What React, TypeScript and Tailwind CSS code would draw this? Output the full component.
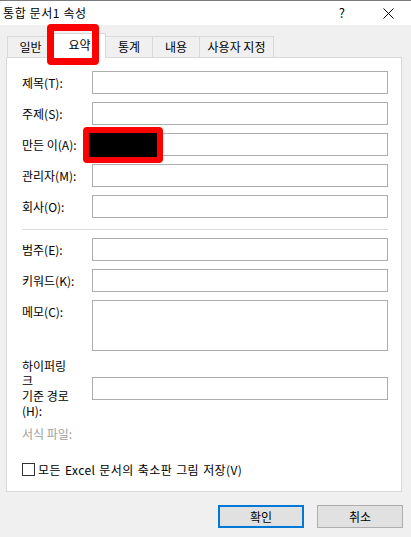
import React from "react";

const Field = ({ label }: { label: string }) => (
  <div className="flex items-center">
    <div className="w-[70px] leading-[16px]">{label}</div>
    <div className="flex-1 h-[23px] border border-[#adadad] bg-white" />
  </div>
);

export default function App() {
  const tabs = [
    { t: "일반", w: 47 },
    { t: "요약", w: 53, active: true },
    { t: "통계", w: 48 },
    { t: "내용", w: 48 },
    { t: "사용자 지정", w: 75 },
  ];
  return (
    <div
      className="relative w-[411px] h-[537px] bg-[#f0f0f0] flex flex-col text-[12px] text-black overflow-hidden"
      style={{ fontFamily: '"Noto Sans CJK KR", "Noto Sans", sans-serif' }}
    >
      {/* title bar */}
      <div className="h-[25px] shrink-0 bg-white border-t border-[#7a7a7a] flex items-center pl-[3px]">
        <span className="leading-[16px] tracking-[0.6px]">통합 문서1 속성</span>
        <span className="ml-auto mr-[38px] text-[13px] leading-[16px]">?</span>
        <svg width="11" height="11" viewBox="0 0 11 11" className="mr-[17px]">
          <path d="M0.5 0.5 L10.5 10.5 M10.5 0.5 L0.5 10.5" stroke="#000" strokeWidth="1" />
        </svg>
      </div>

      {/* tabs */}
      <div className="h-[32px] shrink-0 flex items-end pl-[7px] relative z-10">
        {tabs.map((tab, i) =>
          tab.active ? (
            <div
              key={tab.t}
              className="h-[25px] -mb-px -ml-px bg-white border-l border-t border-r border-[#d9d9d9] flex justify-center pt-[3px] leading-[16px]"
              style={{ width: tab.w }}
            >
              {tab.t}
            </div>
          ) : (
            <div
              key={tab.t}
              className={`h-[21px] border-l border-t border-r border-[#d9d9d9] bg-[#f0f0f0] flex justify-center pt-[2px] leading-[16px] ${i === 0 ? "" : "-ml-px"}`}
              style={{ width: tab.w }}
            >
              {tab.t}
            </div>
          )
        )}
      </div>

      {/* panel */}
      <div className="mx-[6px] w-[396px] h-[435px] shrink-0 border border-[#d9d9d9] bg-white pl-[15px] pr-[13px] pt-[13px] flex flex-col">
        <div className="flex flex-col gap-[8px]">
          <Field label="제목(T):" />
          <Field label="주제(S):" />
          <Field label="만든 이(A):" />
          <Field label="관리자(M):" />
          <Field label="회사(O):" />
        </div>
        <div className="mt-[11px] h-px bg-[#dcdcdc]" />
        <div className="mt-[8px] flex flex-col gap-[8px]">
          <Field label="범주(E):" />
          <Field label="키워드(K):" />
          <div className="flex items-start">
            <div className="w-[70px] leading-[16px] pt-[4px]">메모(C):</div>
            <div className="flex-1 h-[51px] border border-[#adadad] bg-white" />
          </div>
        </div>
        <div className="mt-[7px] flex items-start">
          <div className="w-[70px] leading-[15px]">
            하이퍼링
            <br />크
            <br />기준 경로
            <br />
            (H):
          </div>
          <div className="flex-1 mt-[19px] h-[23px] border border-[#adadad] bg-white" />
        </div>
        <div className="mt-[8px] leading-[15px] text-[#a0a0a0]">서식 파일:</div>
        <div className="mt-[21px] flex items-center h-[15px]">
          <div className="w-[13px] h-[13px] border border-[#333333] bg-white" />
          <span className="ml-[3px] leading-[15px] tracking-[0.4px] [word-spacing:1px]">
            모든 Excel 문서의 축소판 그림 저장(V)
          </span>
        </div>
      </div>

      {/* buttons */}
      <div className="mt-[13px] flex justify-end pr-[8px] gap-[13px]">
        <div className="w-[86px] h-[23px] bg-[#e1e1e1] border-2 border-[#0078d7] flex items-center justify-center leading-[16px]">
          확인
        </div>
        <div className="w-[86px] h-[23px] bg-[#e1e1e1] border border-[#adadad] flex items-center justify-center leading-[16px]">
          취소
        </div>
      </div>

      {/* annotation overlays */}
      <div className="absolute left-[47px] top-[24px] w-[52px] h-[41px] border-[7px] border-[#ff0000] rounded-[4px] z-20" />
      <div className="absolute left-[83px] top-[127px] w-[80px] h-[36px] border-[6px] border-[#ff0000] bg-black rounded-[4px] z-20" />
    </div>
  );
}
